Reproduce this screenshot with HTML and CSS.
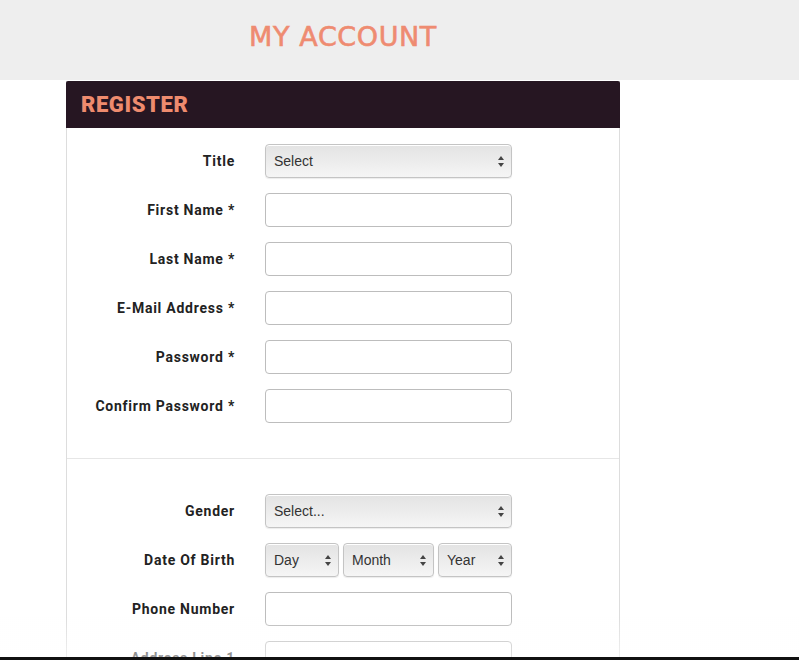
FILE: index.html
```html
<!DOCTYPE html>
<html>
<head>
<meta charset="utf-8">
<link rel="stylesheet" href="styles.css">
</head>
<body>
<header class="top">
  <div class="top-inner"><h1 class="page-title">MY ACCOUNT</h1></div>
</header>
<main class="wrap">
  <section class="panel">
    <h2 class="panel-head">REGISTER</h2>
    <div class="section first">
      <div class="row"><label class="lbl">Title</label><div class="sel"><span>Select</span><i class="arr"></i></div></div>
      <div class="row"><label class="lbl">First Name *</label><input class="inp" type="text"></div>
      <div class="row"><label class="lbl">Last Name *</label><input class="inp" type="text"></div>
      <div class="row"><label class="lbl">E-Mail Address *</label><input class="inp" type="text"></div>
      <div class="row"><label class="lbl">Password *</label><input class="inp" type="password"></div>
      <div class="row"><label class="lbl">Confirm Password *</label><input class="inp" type="password"></div>
    </div>
    <div class="section second">
      <div class="row"><label class="lbl">Gender</label><div class="sel"><span>Select...</span><i class="arr"></i></div></div>
      <div class="row"><label class="lbl">Date Of Birth</label>
        <div class="dob">
          <div class="sel day"><span>Day</span><i class="arr"></i></div>
          <div class="sel month"><span>Month</span><i class="arr"></i></div>
          <div class="sel year"><span>Year</span><i class="arr"></i></div>
        </div>
      </div>
      <div class="row"><label class="lbl">Phone Number</label><input class="inp" type="text"></div>
      <div class="row"><label class="lbl">Address Line 1</label><input class="inp" type="text"></div>
    </div>
  </section>
</main>
<div class="fade"></div>
<div class="bottom-bar"></div>
</body>
</html>
```
FILE: styles.css
```css
html, body { margin: 0; padding: 0; background: #fff; }
body { font-family: Roboto, "Liberation Sans", Arial, sans-serif; }
.top { background: #eeeeee; height: 80px; }
.top-inner { width: 554px; margin-left: 66px; display: flex; justify-content: center; }
.page-title {
  margin: 0; padding-top: 22px;
  font-family: "DejaVu Sans", "Liberation Sans", sans-serif;
  font-weight: 400; font-size: 27px; letter-spacing: 0.6px;
  -webkit-text-stroke: 0.6px #ee8b71;
  color: #ee8b71; line-height: 30px;
}
.wrap { width: 554px; margin-left: 66px; padding-top: 1px; }
.panel { border-left: 1px solid #ddd; border-right: 1px solid #ddd; background: #fff; }
.panel-head {
  margin: 0; height: 47px; background: #261622;
  color: #ee8b6e; font-family: Roboto, "Liberation Sans", Arial, sans-serif; font-weight: 900;
  font-size: 22px; letter-spacing: 0.6px; line-height: 47px;
  padding-left: 15px; border-radius: 2px 2px 0 0; margin-left: -1px; margin-right: -1px;
}
.section { display: flex; flex-direction: column; gap: 15px; }
.section.first { padding: 16px 0 35px; border-bottom: 1px solid #e6e6e6; }
.section.second { padding: 35px 0 40px; }
.row { display: flex; align-items: center; gap: 30px; height: 34px; }
.lbl {
  width: 168px; text-align: right; font-weight: 700; font-size: 14px; color: #222;
  letter-spacing: 0.75px; white-space: nowrap;
}
.inp {
  box-sizing: border-box; width: 247px; height: 34px; margin: 0;
  border: 1px solid #bdbdbd; border-radius: 4px; background: #fff;
}
.sel {
  box-sizing: border-box; width: 247px; height: 34px;
  border: 1px solid #c4c4c4; border-radius: 4px;
  background: linear-gradient(#e3e3e3, #f5f5f5);
  box-shadow: inset 0 1px 0 #fff, 0 1px 1px rgba(0,0,0,0.08);
  display: flex; align-items: center; justify-content: space-between;
  padding: 0 6px 0 8px;
  font-family: "Liberation Sans", Arial, sans-serif; font-size: 14px; color: #333;
}
.arr { position: relative; width: 7px; height: 11px; display: block; }
.arr::before, .arr::after {
  content: ""; position: absolute; left: 0;
  border-left: 3.5px solid transparent; border-right: 3.5px solid transparent;
}
.arr::before { top: 0; border-bottom: 4.5px solid #444; }
.arr::after { bottom: 0; border-top: 4.5px solid #444; }
.dob { display: flex; gap: 4px; }
.sel.day { width: 74px; }
.sel.month { width: 91px; }
.sel.year { width: 74px; }
.fade {
  position: fixed; left: 0; right: 0; bottom: 3px; height: 40px;
  background: linear-gradient(rgba(255,255,255,0), rgba(255,255,255,0.55));
  pointer-events: none;
}
.bottom-bar { position: fixed; left: 0; right: 0; bottom: 0; height: 3px; background: #111; }
```
